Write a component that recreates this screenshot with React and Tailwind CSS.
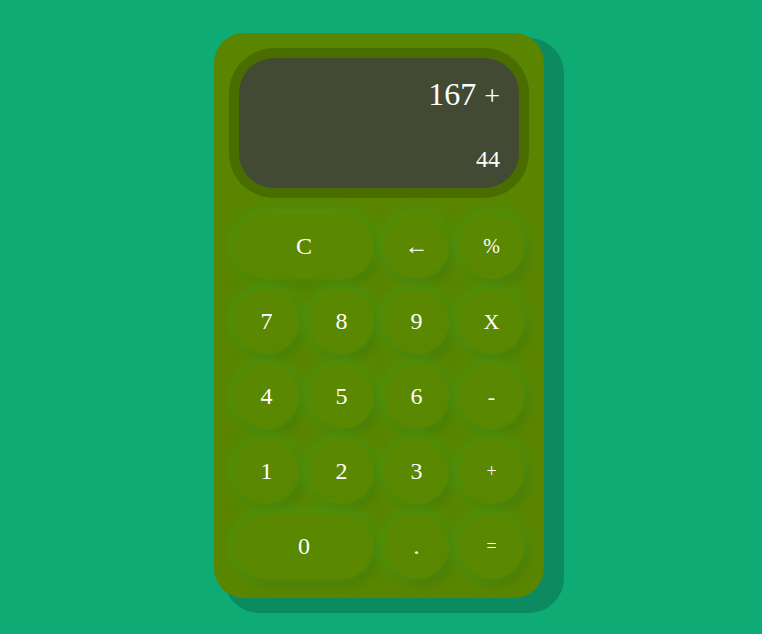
import React from 'react';

const keys = [
  { label: 'C', wide: true, size: 'text-[24px]' },
  { label: '←', size: 'text-[24px]' },
  { label: '%', size: 'text-[20px]' },
  { label: '7' }, { label: '8' }, { label: '9' }, { label: 'X', size: 'text-[22px]' },
  { label: '4' }, { label: '5' }, { label: '6' }, { label: '-', size: 'text-[22px]' },
  { label: '1' }, { label: '2' }, { label: '3' }, { label: '+', size: 'text-[18px]' },
  { label: '0', wide: true }, { label: '.' }, { label: '=', size: 'text-[18px]' },
];

const App = () => {
  return (
    <div className="min-h-screen w-full bg-[#0fab75] flex items-center justify-center" style={{ fontFamily: '"Liberation Serif", "DejaVu Serif", serif' }}>
      <div className="mr-[4px] mb-[4px] w-[330px] rounded-[30px] bg-[#5a8500] p-[15px] pb-[19px] shadow-[15px_10px_0_5px_#0d8b60]">
        <div className="h-[150px] rounded-[45px] bg-[#4a6d00] p-[10px]">
          <div className="flex h-full flex-col items-end justify-between rounded-[35px] bg-[#434a33] pr-[19px] pt-[16px] pb-[14px] text-white">
            <div className="text-[32px] leading-[40px]">167 <span className="text-[28px]">+</span></div>
            <div className="text-[24px] leading-[30px]">44</div>
          </div>
        </div>
        <div className="mt-[16px] grid grid-cols-[repeat(4,65px)] gap-[10px] px-[5px]">
          {keys.map((k, i) => (
            <button
              key={i}
              className={`${k.wide ? 'col-span-2' : ''} h-[65px] rounded-full bg-[#5a8800] text-white ${k.size || 'text-[24px]'} shadow-[0_0_16px_2px_#4a9812,4px_6px_8px_rgba(0,0,0,0.16)]`}
            >
              {k.label}
            </button>
          ))}
        </div>
      </div>
    </div>
  );
};

export default App;
